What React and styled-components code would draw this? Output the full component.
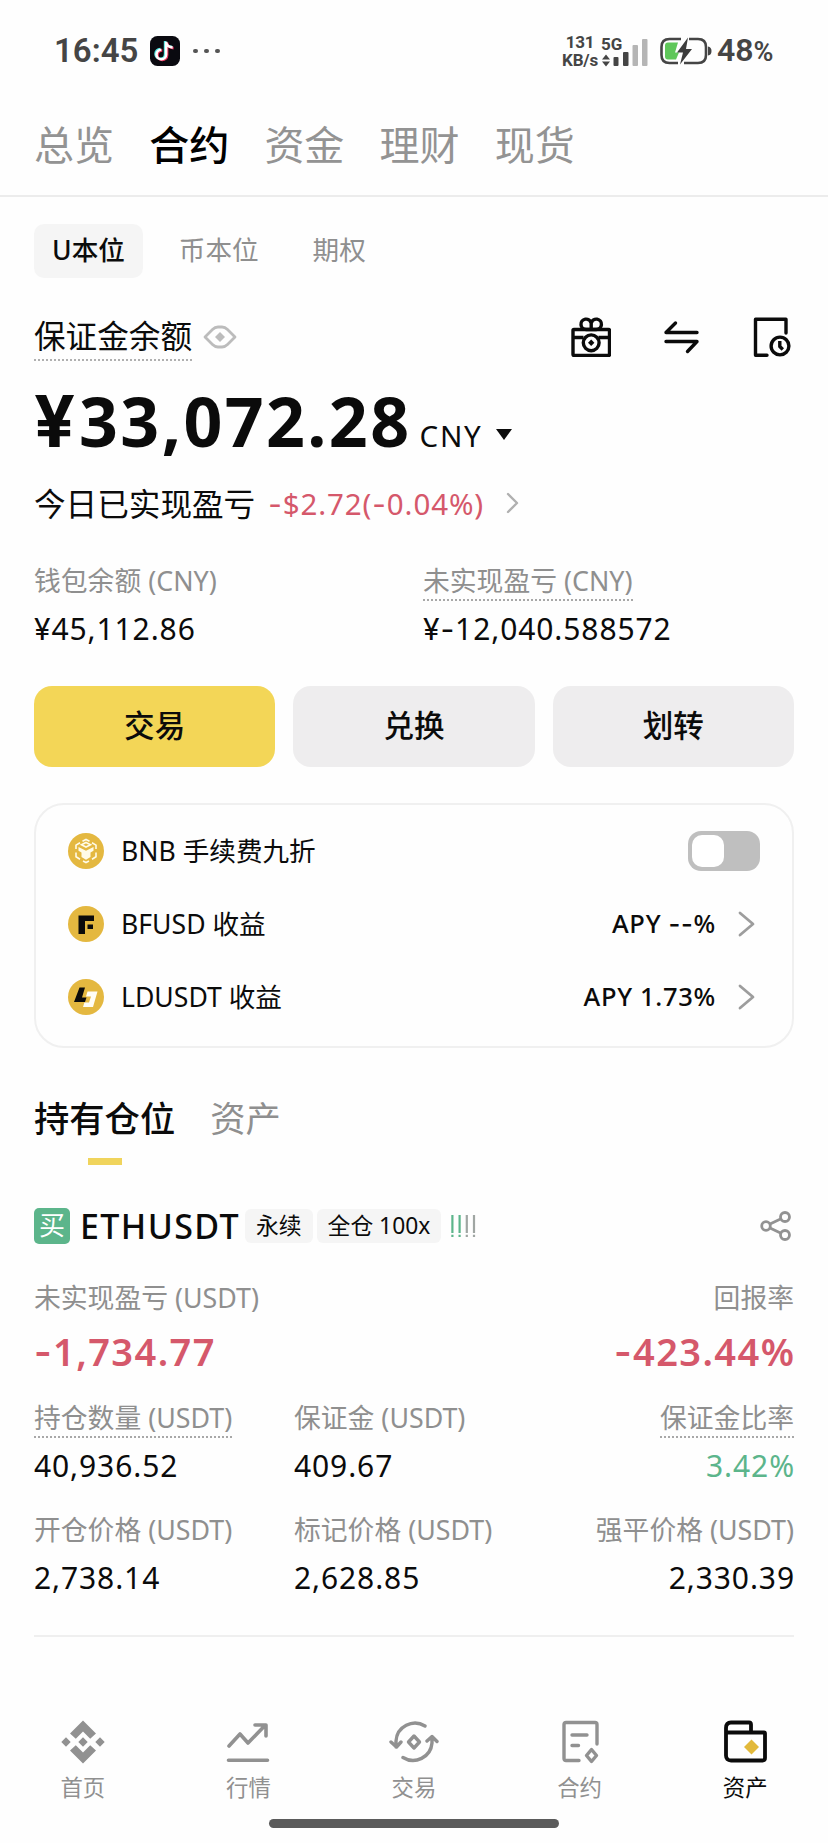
import styled, { createGlobalStyle } from 'styled-components'

const GlobalStyle = createGlobalStyle`
  * {
    box-sizing: border-box;
  }

  body {
    margin: 0;
    background-color: #fefefe;
    color: #0b0b0b;
    font-family: 'Noto Sans', 'Noto Sans CJK SC', sans-serif;
  }

  svg {
    display: block;
    flex: none;
  }
`

const Screen = styled.div`
  width: 828px;
  height: 1843px;
  display: flex;
  flex-direction: column;
  overflow: hidden;
`

/* ---------- status bar ---------- */

const StatusBar = styled.div`
  height: 100px;
  padding: 2px 52px 0 54px;
  display: flex;
  align-items: center;
  justify-content: space-between;
  font-family: Roboto, sans-serif;
  color: #454545;
`

const StatusGroup = styled.div`
  display: flex;
  align-items: center;
  height: 36px;
`

const Clock = styled.div`
  width: 96px;
  font-size: 33px;
  font-weight: 600;
  line-height: 36px;
  white-space: nowrap;
`

const Dots = styled.div`
  display: flex;
  gap: 6.5px;
  margin-left: 13px;

  i {
    width: 4.5px;
    height: 4.5px;
    border-radius: 50%;
    background-color: #555;
  }
`

const NetSpeed = styled.div`
  display: flex;
  flex-direction: column;
  align-items: center;
  width: 36px;
  font-size: 17px;
  font-weight: 700;
  line-height: 18px;
  letter-spacing: -0.2px;
`

const Signal = styled.div`
  display: flex;
  flex-direction: column;
  width: 50px;
  margin: 0 9px 0 3px;
  font-size: 17px;
  font-weight: 700;
  line-height: 18px;

  svg {
    margin-top: -14px;
  }
`

const BatteryText = styled.div`
  width: 59px;
  margin-left: 5px;
  font-size: 32px;
  font-weight: 600;
  line-height: 36px;
  white-space: nowrap;

  small {
    font-size: 27px;
  }
`

/* ---------- header tabs ---------- */

const TopTabs = styled.nav`
  height: 97px;
  padding: 0 34px;
  display: flex;
  gap: 35.2px;
  border-bottom: 2px solid #ececec;
`

const TopTab = styled.div`
  font-size: 40px;
  line-height: 90px;
  font-weight: ${props => props.$active ? 500 : 400};
  color: ${props => props.$active ? '#000' : '#939393'};
`

const SubTabs = styled.div`
  display: flex;
  gap: 18px;
  margin-top: 27px;
  padding: 0 34px;
`

const SubTab = styled.div`
  height: 54px;
  padding: 0 18px;
  border-radius: 10px;
  font-size: 26.6px;
  line-height: 53px;
  font-weight: ${props => props.$active ? 500 : 400};
  color: ${props => props.$active ? '#0b0b0b' : '#8f8f8f'};
  background-color: ${props => props.$active ? '#f5f5f5' : 'transparent'};
`

/* ---------- balance ---------- */

const Section = styled.section`
  padding: 0 34px;
`

const TitleRow = styled.div`
  display: flex;
  align-items: center;
  height: 50px;
  margin-top: 34px;
`

const Title = styled.div`
  height: 48px;
  margin-right: 11px;
  font-size: 31.6px;
  line-height: 45px;
  white-space: nowrap;
  border-bottom: 2px dotted #b0b0b0;
`

const Tools = styled.div`
  display: flex;
  align-items: center;
  gap: 53px;
  margin-left: auto;
  margin-right: 3px;
`

const Balance = styled.div`
  display: flex;
  align-items: baseline;
  height: 84px;
  margin-top: 17px;
  line-height: 84px;
  white-space: nowrap;
`

const Amount = styled.span`
  font-size: 68px;
  font-weight: 700;
  letter-spacing: 2.4px;
`

const Currency = styled.span`
  margin-left: 8px;
  font-size: 29.5px;
  letter-spacing: 1.8px;
`

const Caret = styled.i`
  margin-left: 13px;
  border: solid transparent;
  border-width: 11px 8.5px 0;
  border-top-color: #0b0b0b;
  transform: translateY(-7px);
`

const TodayRow = styled.div`
  display: flex;
  align-items: center;
  height: 44px;
  margin-top: 18px;
  margin-bottom: 1px;
  font-size: 31.6px;
  line-height: 43px;
  white-space: nowrap;

  svg {
    margin-left: 22px;
  }
`

const TodayPnl = styled.span`
  margin-left: 13px;
  font-size: 29.5px;
  letter-spacing: 0.9px;
  color: #d5586b;
`

const WalletGrid = styled.div`
  display: grid;
  grid-template-columns: 389px 1fr;
  margin-top: 36px;
`

const Field = styled.div`
  display: flex;
  flex-direction: column;
  align-items: ${props => props.$right ? 'flex-end' : 'flex-start'};
  white-space: nowrap;
`

const Label = styled.div`
  height: 40px;
  font-size: 26.8px;
  line-height: 39px;
  color: #8f8f8f;
  border-bottom: 2px ${props => props.$dotted ? 'dotted #a8a8a8' : 'solid transparent'};
`

const Value = styled.div`
  margin-top: 8px;
  margin-right: -1px;
  font-size: 30px;
  line-height: 40px;
  letter-spacing: 0.9px;
  color: ${props => props.$color || '#0b0b0b'};
`

const Actions = styled.div`
  display: grid;
  grid-template-columns: repeat(3, 1fr);
  gap: 18px;
  margin-top: 37px;
`

const Action = styled.button`
  height: 81px;
  padding: 0 0 3px;
  border: 0;
  border-radius: 18px;
  font: 500 30.6px / 78px 'Noto Sans', 'Noto Sans CJK SC', sans-serif;
  color: #0b0b0b;
  background-color: ${props => props.$primary ? '#f3d657' : '#eeedee'};
`

/* ---------- earn card ---------- */

const Card = styled.div`
  height: 245px;
  margin-top: 36px;
  padding: 9px 32px 0;
  border: 2px solid #f0f0f0;
  border-radius: 30px;
`

const CardRow = styled.div`
  display: flex;
  align-items: center;
  height: 73px;
  font-size: 26.6px;
  white-space: nowrap;

  > svg:last-child {
    margin-right: 5px;
  }
`

const CardName = styled.span`
  margin: -3px auto 0 17px;
`

const Apy = styled.span`
  margin-top: -2px;
  margin-right: 22px;
  font-size: 25.5px;
  font-weight: 500;
  letter-spacing: 0.7px;
`

const Toggle = styled.div`
  width: 72px;
  height: 40px;
  padding: 4px;
  border-radius: 13px;
  background-color: #bfbfbf;

  &::before {
    content: '';
    display: block;
    width: 32px;
    height: 32px;
    border-radius: 10px;
    background-color: #fff;
  }
`

/* ---------- positions ---------- */

const PositionTabs = styled.div`
  display: flex;
  gap: 35px;
  height: 73px;
  margin-top: 44px;
`

const PositionTab = styled.div`
  display: flex;
  flex-direction: column;
  align-items: center;
  height: 73px;
  font-size: 35.3px;
  line-height: 52px;
  font-weight: ${props => props.$active ? 500 : 400};
  color: ${props => props.$active ? '#0b0b0b' : '#8f8f8f'};

  &::after {
    content: '';
    width: 34px;
    height: 7px;
    margin-top: 14px;
    background-color: ${props => props.$active ? '#f0d45c' : 'transparent'};
  }
`

const PositionHead = styled.div`
  display: flex;
  align-items: center;
  height: 36px;
  margin-top: 43px;
  white-space: nowrap;

  > :last-child {
    margin-left: auto;
    margin-right: 2px;
  }
`

const Side = styled.span`
  width: 36px;
  height: 36px;
  border-radius: 5px;
  font-size: 26px;
  line-height: 35px;
  text-align: center;
  color: #fff;
  background-color: #5cb58b;
`

const Symbol = styled.span`
  width: 165px;
  margin-left: 10px;
  font-size: 34px;
  font-weight: 500;
  line-height: 36px;
  letter-spacing: 1.4px;
`

const Chip = styled.span`
  height: 34px;
  padding: 0 11px;
  margin-right: 4px;
  border-radius: 6px;
  font-size: 22.8px;
  line-height: 34px;
  background-color: #f5f5f5;
`

const RiskLevel = styled.span`
  margin-left: 6px;
`

const Pair = styled.div`
  display: flex;
  justify-content: space-between;
  margin-top: 34px;
`

const Pnl = styled.div`
  margin-top: 11px;
  margin-bottom: 1px;
  margin-right: -1.3px;
  font-size: 38px;
  font-weight: 600;
  line-height: 44px;
  letter-spacing: 1.4px;
  color: #d5586b;
`

const Stats = styled.div`
  display: grid;
  grid-template-columns: 260px 240px 1fr;
  margin-top: ${props => props.$top};
`

const Rule = styled.div`
  height: 2px;
  margin-top: 37px;
  background-color: #efefef;
`

/* ---------- bottom nav ---------- */

const BottomNav = styled.nav`
  display: flex;
  margin-top: 83px;
`

const NavItem = styled.div`
  flex: 1;
  display: flex;
  flex-direction: column;
  align-items: center;
  font-size: 22.4px;
  line-height: 36px;
  color: ${props => props.$active ? '#0b0b0b' : '#909090'};

  svg {
    margin-bottom: 6px;
  }
`

const HomeBar = styled.div`
  width: 290px;
  height: 9px;
  margin: 13px auto 0;
  border-radius: 5px;
  background-color: #5b5b5b;
`

/* ---------- numbers ---------- */

// the wide minus and yen come from Inter
const Sign = styled.span`
  font-family: Inter, sans-serif;
  line-height: 1;
`

// the big yen sign is a bit wider still
const BigYen = styled(Sign)`
  margin-right: 1px;
  font-size: 72px;
  letter-spacing: 3px;
`

const Num = ({ children }) => (
    children.split(/([-¥])/).filter(Boolean).map((part, i) => (
        part === '-' || part === '¥' ? <Sign key={i}>{part}</Sign> : part
    ))
)

/* ---------- icons ---------- */

const TikTokIcon = () => (
    <svg width="30" height="30" viewBox="0 0 30 30">
        <rect width="30" height="30" rx="7.5" fill="#0a0a10" />
        <g fill="none" strokeWidth="2.6">
            <path d="M16 5.5v12.8a4.8 4.8 0 1 1-4.8-4.8M16 6c.4 3 2.8 5 6.5 5.2" stroke="#4fe3e0" transform="translate(-.9 -.4)" />
            <path d="M16 5.5v12.8a4.8 4.8 0 1 1-4.8-4.8M16 6c.4 3 2.8 5 6.5 5.2" stroke="#e8335c" transform="translate(1.1 .9)" />
            <path d="M16 5.5v12.8a4.8 4.8 0 1 1-4.8-4.8M16 6c.4 3 2.8 5 6.5 5.2" stroke="#fff" transform="translate(.1 .2)" />
        </g>
    </svg>
)

const SignalIcon = () => (
    <svg width="50" height="28" viewBox="0 0 50 28">
        <path d="M5 15.5l4 5H1zM5 27.5l4-5H1z" fill="#454545" />
        <rect x="12.5" y="18" width="5" height="9" rx="1" fill="#454545" />
        <rect x="22" y="13" width="5.5" height="14" rx="1" fill="#454545" />
        <rect x="31.5" y="6" width="5.5" height="21" rx="1" fill="#b5b5b5" />
        <rect x="41" y="0" width="5.5" height="27" rx="1" fill="#b5b5b5" />
    </svg>
)

const BatteryIcon = () => (
    <svg width="52" height="28" viewBox="0 0 52 28">
        <path d="M5 8.5q0-3 3-3h10l-3 10h4l-3 7H8q-3 0-3-3z" fill="#5fc75a" />
        <path d="M21 2H9.5Q1.5 2 1.5 10v8q0 8 8 8H18M29 2h9q8 0 8 8v8q0 8-8 8H24" fill="none" stroke="#454545" strokeWidth="2.6" />
        <path d="M48 9.5q3.5.5 3.5 4.5T48 18.5z" fill="#454545" />
        <path d="M28 .5L17 15.5h6L20 27.5l12-15.5h-6z" fill="#3c3c3c" />
    </svg>
)

const EyeIcon = () => (
    <svg width="34" height="24" viewBox="0 0 34 24" fill="none" stroke="#bcbcbc" strokeWidth="2.8" strokeLinejoin="round">
        <path d="M2 12L9.5 4.5Q12 2 15 2h4q3 0 5.5 2.5L32 12l-7.5 7.5Q22 22 19 22h-4q-3 0-5.500-2.500z" />
        <path d="M17 7l5 5-5 5-5-5z" fill="#bcbcbc" stroke="none" />
    </svg>
)

const GiftIcon = () => (
    <svg width="40" height="40" viewBox="0 0 40 40" fill="none" stroke="#0b0b0b" strokeWidth="3.4" strokeLinejoin="round">
        <rect x="2" y="12.5" width="36.5" height="26" rx="1" />
        <path d="M2 20.5h10.500M27.500 20.500H38" />
        <circle cx="20.2" cy="25.8" r="7.900" />
        <path d="M20.2 12.5h-5a5.200 5.200 0 1 1 5-6.500v6.500zM20.200 12.500h5a5.200 5.200 0 1 0-5-6.500" />
        <path d="M20.2 22.6l3.200 3.200-3.200 3.200-3.200-3.200z" fill="#0b0b0b" stroke="none" />
    </svg>
)

const SwapIcon = () => (
    <svg width="36" height="34" viewBox="0 0 36 34" fill="none" stroke="#0b0b0b" strokeWidth="3.4" strokeLinecap="round" strokeLinejoin="round">
        <path d="M33 12.5H2L11.5 3M2 21.5h31L23.5 31.5" />
    </svg>
)

const HistoryIcon = () => (
    <svg width="38" height="40" viewBox="0 0 38 40" fill="none" stroke="#0b0b0b" strokeWidth="3.4" strokeLinejoin="round">
        <path d="M14 38.3H2.5v-36h30.5V16" strokeLinecap="round" />
        <circle cx="27" cy="29" r="8.9" />
        <path d="M26.8 24v5.5l3 3" />
    </svg>
)

const Chevron = ({ width = 14, height = 26, color = '#9d9d9d', stroke = 2.8 }) => (
    <svg width={width} height={height} viewBox={`0 0 ${width} ${height}`} fill="none" stroke={color} strokeWidth={stroke} strokeLinecap="round" strokeLinejoin="round">
        <path d={`M2 2L${width - 2} ${height / 2}L2 ${height - 2}`} />
    </svg>
)

const BnbCoin = () => (
    <svg width="36" height="36" viewBox="0 0 36 36">
        <circle cx="18" cy="18" r="18" fill="#e4b840" />
        <g fill="none" stroke="#fffbe8" strokeWidth="1.6">
            <path d="M14.5 8.3L18 6.5l3.500 1.800M24 9.800l4 2.300v4M28 19.500v4.300l-4 2.400M21 28l-3 1.500-3-1.500M12 26.200l-4-2.400v-4.300M8 16.100v-4l4-2.300" />
            <path d="M13.5 11.8l4.500-2.300 4.500 2.300-4.500 2.200z" />
        </g>
        <path d="M10.5 14l7.500 3.700 7.500-3.700v3.800l-3 1.700v4.500L18 26.800 13.500 24v-4.500l-3-1.700z" fill="#fffbe8" />
    </svg>
)

const BfusdCoin = () => (
    <svg width="36" height="36" viewBox="0 0 36 36">
        <circle cx="18" cy="18" r="18" fill="#e4b840" />
        <path d="M10.5 9.5h15.500V15h-9v13h-6.500z" fill="#0b0b0b" />
        <path d="M19.5 18.5h5.500V23h-5.500z" fill="#0b0b0b" />
    </svg>
)

const LdusdtCoin = () => (
    <svg width="36" height="36" viewBox="0 0 36 36">
        <circle cx="18" cy="18" r="18" fill="#e4b840" />
        <path d="M11.5 8.5H17L14 18.5h4.500L17 23H6z" fill="#0b0b0b" />
        <path d="M19.5 12.5h10L25 28H15l1.400-4.500h4.600l2-6h-5z" fill="#fffdf5" />
    </svg>
)

const RiskIcon = () => (
    <svg width="26" height="24" viewBox="0 0 26 24">
        {[0, 7.2, 14.4, 21.6].map((x, i) => (
            <path key={x} d={`M${x + 1.4} 1v18M${x + 1.4} 20.8v2.2`} stroke={i < 2 ? '#5cb58b' : '#a0a6a3'} strokeWidth="2.2" />
        ))}
    </svg>
)

const ShareIcon = () => (
    <svg width="32" height="30" viewBox="0 0 32 30" fill="none" stroke="#929292" strokeWidth="2.8">
        <circle cx="6" cy="15" r="4.3" />
        <circle cx="25" cy="6" r="4.5" />
        <circle cx="25" cy="24" r="4.5" />
        <path d="M10 13l10.500-5M10 17l10.500 5" />
    </svg>
)

const HomeIcon = () => (
    <svg width="44" height="44" viewBox="0 0 44 44" fill="#919191">
        <path d="M22 .5l13 13-5.800 5.300L22 11.600l-7.200 7.200L9 13.500z" />
        <path d="M22 43.5l13-13-5.800-5.300-7.200 7.200-7.200-7.200L9 30.500z" />
        <path d="M22 17.3l4.700 4.700-4.700 4.700-4.700-4.700zM5 17.300L9.700 22 5 26.700.3 22zM39 17.300l4.700 4.700-4.700 4.700-4.700-4.700z" />
    </svg>
)

const MarketIcon = () => (
    <svg width="44" height="44" viewBox="0 0 44 44" fill="none" stroke="#919191" strokeWidth="3.6">
        <path d="M3 26L14 14l8 9L38 6.500M29 5h11v11M2.500 40.200h39" strokeLinejoin="round" strokeLinecap="round" />
    </svg>
)

const TradeIcon = () => (
    <svg width="50" height="44" viewBox="0 0 50 44" fill="none" stroke="#919191" strokeWidth="3.4" strokeLinecap="round" strokeLinejoin="round">
        <path d="M36 6A19 19 0 0 0 7 21v6M2 22l5.500 5 4.500-5" />
        <path d="M14 37.5A19 19 0 0 0 43 23v-6M38 21l5-4.500 5 5" />
        <path d="M25 16l5.500 6-5.500 6-5.500-6z" />
    </svg>
)

const FuturesIcon = () => (
    <svg width="38" height="44" viewBox="0 0 38 44" fill="none" stroke="#919191" strokeWidth="3.4" strokeLinecap="round" strokeLinejoin="round">
        <path d="M18 40.5H5q-2 0-2-2v-34q0-2 2-2h29q2 0 2 2V24M11 15h15M11 25.500h6.500" />
        <path d="M30.5 29.5l5 6-5 6-5-6z" />
    </svg>
)

const WalletIcon = () => (
    <svg width="44" height="44" viewBox="0 0 44 44" fill="none" stroke="#0b0b0b" strokeWidth="3.8" strokeLinejoin="round">
        <path d="M3 12.5h38q1 0 1 1V38q0 2.500-2.500 2.500H8q-5 0-5-5V8q0-5.500 5-5.500h18q2 0 2 2v8" />
        <path d="M28.5 19.5l7.500 7.500-7.500 7.500L21 27z" fill="#e2b93b" stroke="none" />
    </svg>
)

const topTabs = ['总览', '合约', '资金', '理财', '现货']
const subTabs = ['U本位', '币本位', '期权']

const navItems = [
    { name: '首页', Icon: HomeIcon },
    { name: '行情', Icon: MarketIcon },
    { name: '交易', Icon: TradeIcon },
    { name: '合约', Icon: FuturesIcon },
    { name: '资产', Icon: WalletIcon, active: true },
]

export default function App() {

    return (
        <Screen>
            <GlobalStyle />
            <StatusBar>
                <StatusGroup>
                    <Clock>16:45</Clock>
                    <TikTokIcon />
                    <Dots><i /><i /><i /></Dots>
                </StatusGroup>
                <StatusGroup>
                    <NetSpeed>
                        <span>131</span>
                        <span>KB/s</span>
                    </NetSpeed>
                    <Signal>
                        <span>5G</span>
                        <SignalIcon />
                    </Signal>
                    <BatteryIcon />
                    <BatteryText>48<small>%</small></BatteryText>
                </StatusGroup>
            </StatusBar>

            <TopTabs>
                {topTabs.map((tab, i) => <TopTab key={tab} $active={i === 1}>{tab}</TopTab>)}
            </TopTabs>
            <SubTabs>
                {subTabs.map((tab, i) => <SubTab key={tab} $active={i === 0}>{tab}</SubTab>)}
            </SubTabs>

            <Section>
                <TitleRow>
                    <Title>保证金余额</Title>
                    <EyeIcon />
                    <Tools>
                        <GiftIcon />
                        <SwapIcon />
                        <HistoryIcon />
                    </Tools>
                </TitleRow>
                <Balance>
                    <Amount><BigYen>¥</BigYen>33,072.28</Amount>
                    <Currency>CNY</Currency>
                    <Caret />
                </Balance>
                <TodayRow>
                    今日已实现盈亏
                    <TodayPnl><Num>-$2.72(-0.04%)</Num></TodayPnl>
                    <Chevron width={13} height={22} color="#b0b0b0" stroke={2.4} />
                </TodayRow>
                <WalletGrid>
                    <Field>
                        <Label>钱包余额 (CNY)</Label>
                        <Value><Num>¥45,112.86</Num></Value>
                    </Field>
                    <Field>
                        <Label $dotted>未实现盈亏 (CNY)</Label>
                        <Value><Num>¥-12,040.588572</Num></Value>
                    </Field>
                </WalletGrid>
                <Actions>
                    <Action $primary>交易</Action>
                    <Action>兑换</Action>
                    <Action>划转</Action>
                </Actions>
                <Card>
                    <CardRow>
                        <BnbCoin />
                        <CardName>BNB 手续费九折</CardName>
                        <Toggle />
                    </CardRow>
                    <CardRow>
                        <BfusdCoin />
                        <CardName>BFUSD 收益</CardName>
                        <Apy><Num>APY --%</Num></Apy>
                        <Chevron width={17} />
                    </CardRow>
                    <CardRow>
                        <LdusdtCoin />
                        <CardName>LDUSDT 收益</CardName>
                        <Apy>APY 1.73%</Apy>
                        <Chevron width={17} />
                    </CardRow>
                </Card>
            </Section>

            <Section>
                <PositionTabs>
                    <PositionTab $active>持有仓位</PositionTab>
                    <PositionTab>资产</PositionTab>
                </PositionTabs>
                <PositionHead>
                    <Side>买</Side>
                    <Symbol>ETHUSDT</Symbol>
                    <Chip>永续</Chip>
                    <Chip>全仓 100x</Chip>
                    <RiskLevel><RiskIcon /></RiskLevel>
                    <ShareIcon />
                </PositionHead>
                <Pair>
                    <Field>
                        <Label>未实现盈亏 (USDT)</Label>
                        <Pnl><Num>-1,734.77</Num></Pnl>
                    </Field>
                    <Field $right>
                        <Label>回报率</Label>
                        <Pnl><Num>-423.44%</Num></Pnl>
                    </Field>
                </Pair>
                <Stats $top="24px">
                    <Field>
                        <Label $dotted>持仓数量 (USDT)</Label>
                        <Value>40,936.52</Value>
                    </Field>
                    <Field>
                        <Label>保证金 (USDT)</Label>
                        <Value>409.67</Value>
                    </Field>
                    <Field $right>
                        <Label $dotted>保证金比率</Label>
                        <Value $color="#5cb58b">3.42%</Value>
                    </Field>
                </Stats>
                <Stats $top="24px">
                    <Field>
                        <Label>开仓价格 (USDT)</Label>
                        <Value>2,738.14</Value>
                    </Field>
                    <Field>
                        <Label>标记价格 (USDT)</Label>
                        <Value>2,628.85</Value>
                    </Field>
                    <Field $right>
                        <Label>强平价格 (USDT)</Label>
                        <Value>2,330.39</Value>
                    </Field>
                </Stats>
                <Rule />
            </Section>

            <BottomNav>
                {navItems.map(({ name, Icon, active }) => (
                    <NavItem key={name} $active={active}>
                        <Icon />
                        {name}
                    </NavItem>
                ))}
            </BottomNav>
            <HomeBar />
        </Screen>
    )

}
